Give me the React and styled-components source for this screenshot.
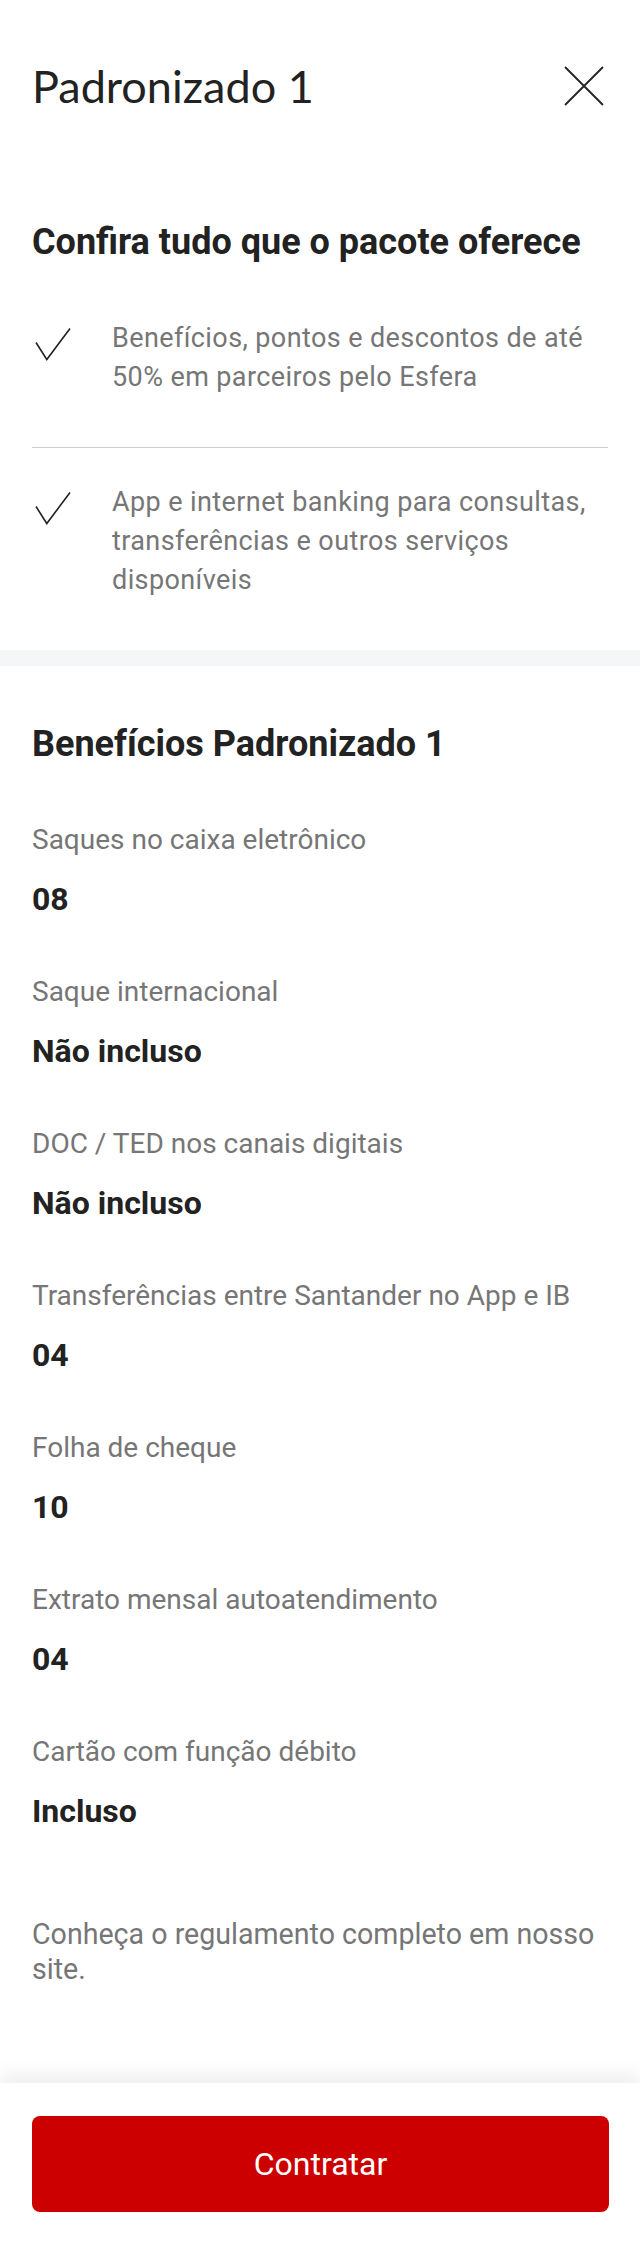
import styled, { createGlobalStyle } from 'styled-components';

const features = [
  'Benefícios, pontos e descontos de até 50% em parceiros pelo Esfera',
  'App e internet banking para consultas, transferências e outros serviços disponíveis',
];

const benefits = [
  { label: 'Saques no caixa eletrônico', value: '08' },
  { label: 'Saque internacional', value: 'Não incluso' },
  { label: 'DOC / TED nos canais digitais', value: 'Não incluso' },
  { label: 'Transferências entre Santander no App e IB', value: '04' },
  { label: 'Folha de cheque', value: '10' },
  { label: 'Extrato mensal autoatendimento', value: '04' },
  { label: 'Cartão com função débito', value: 'Incluso' },
];

export default function App() {
  return (
    <>
      <GlobalStyle />
      <Page>
        <Header>
          <Title>Padronizado 1</Title>
          <CloseButton aria-label="Fechar">
            <svg width="40" height="40" viewBox="0 0 40 40">
              <path d="M1 1 L39 39 M39 1 L1 39" stroke="#222" strokeWidth="1.8" fill="none" />
            </svg>
          </CloseButton>
        </Header>

        <Intro>
          <SectionTitle>Confira tudo que o pacote oferece</SectionTitle>
          <FeatureList>
            {features.map((text) => (
              <Feature key={text}>
                <CheckBox>
                  <svg width="36" height="34" viewBox="0 0 36 34">
                    <path d="M1 15.5 L11.8 32.5 L35 1.5" stroke="#222" strokeWidth="1.6" fill="none" />
                  </svg>
                </CheckBox>
                <FeatureText>{text}</FeatureText>
              </Feature>
            ))}
          </FeatureList>
        </Intro>

        <Band />

        <Benefits>
          <SectionTitle>Benefícios Padronizado 1</SectionTitle>
          <BenefitList>
            {benefits.map((b) => (
              <Benefit key={b.label}>
                <Label>{b.label}</Label>
                <Value>{b.value}</Value>
              </Benefit>
            ))}
          </BenefitList>
          <Note>Conheça o regulamento completo em nosso site.</Note>
        </Benefits>

        <Footer>
          <PrimaryButton>Contratar</PrimaryButton>
        </Footer>
      </Page>
    </>
  );
}

const GlobalStyle = createGlobalStyle`
    body {
        margin: 0;
        background: #fff;
        font-family: Roboto, "Liberation Sans", sans-serif;
    }
`

const Page = styled.div`
    min-height: 2254px;
    display: flex;
    flex-direction: column;
    background: #fff;
`

const Header = styled.header`
    display: flex;
    align-items: center;
    justify-content: space-between;
    padding: 59px 36px 0 32px;
`

const Title = styled.h1`
    margin: 0;
    font-family: Lato, "Open Sans", sans-serif;
    font-weight: 400;
    font-size: 45px;
    line-height: 54px;
    color: #222;
`

const CloseButton = styled.button`
    display: flex;
    padding: 0;
    border: none;
    background: none;
`

const Intro = styled.section`
    padding: 107px 32px 0;
`

const SectionTitle = styled.h2`
    margin: 0 0 20px;
    font-size: 36px;
    line-height: 44px;
    font-weight: 700;
    color: #222;
`

const FeatureList = styled.ul`
    margin: 0;
    padding: 0;
    list-style: none;
`

const Feature = styled.li`
    display: flex;
    align-items: flex-start;
    padding: 35px 0 50px;
    & + & {
        border-top: 1px solid #cccccc;
    }
`

const CheckBox = styled.span`
    flex: 0 0 80px;
    padding: 8px 0 0 3px;
    box-sizing: border-box;
    display: flex;
`

const FeatureText = styled.p`
    flex: 1;
    margin: 0;
    font-size: 27px;
    line-height: 39px;
    letter-spacing: 0.4px;
    color: #767676;
`

const Band = styled.div`
    height: 16px;
    background: #f4f6f8;
`

const Benefits = styled.section`
    flex: 1;
    padding: 56px 32px 0;
    & ${SectionTitle} {
        margin-bottom: 56px;
    }
`

const BenefitList = styled.dl`
    margin: 0;
    display: flex;
    flex-direction: column;
    gap: 56px;
`

const Benefit = styled.div`
    display: flex;
    flex-direction: column;
    gap: 22px;
`

const Label = styled.dt`
    font-size: 28px;
    line-height: 36px;
    color: #767676;
`

const Value = styled.dd`
    margin: 0;
    font-size: 32px;
    line-height: 38px;
    font-weight: 700;
    color: #222;
`

const Note = styled.p`
    margin: 87px 0 0;
    font-size: 28.6px;
    line-height: 35px;
    color: #767676;
`

const Footer = styled.footer`
    padding: 33px 31px 42px 32px;
    background: #fff;
    box-shadow: 0 -8px 18px rgba(0, 0, 0, 0.07);
`

const PrimaryButton = styled.button`
    width: 100%;
    height: 96px;
    border: none;
    border-radius: 8px;
    background: #cc0000;
    color: #fff;
    font-family: Roboto, "Liberation Sans", sans-serif;
    font-size: 32px;
`
